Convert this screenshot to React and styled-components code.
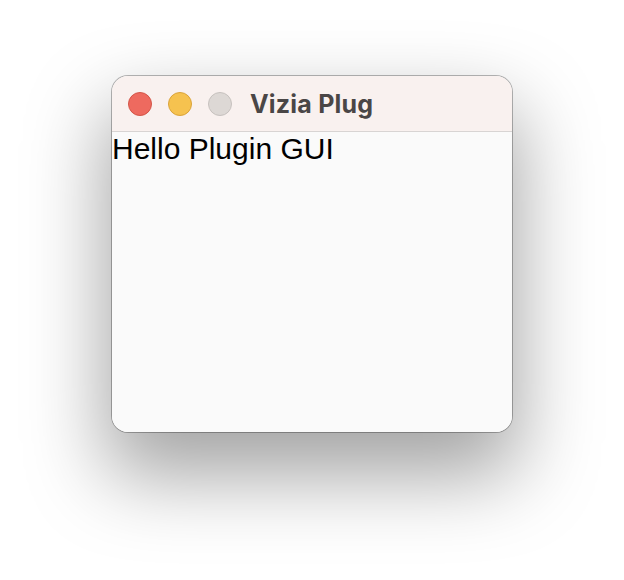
import React from "react";
import styled, { createGlobalStyle } from "styled-components";

const Global = createGlobalStyle`
  html, body { margin: 0; padding: 0; background: #ffffff; }
  body { width: 624px; height: 580px; overflow: hidden; }
`;

const Desktop = styled.div`
  width: 624px;
  height: 580px;
  display: flex;
  justify-content: center;
  align-items: flex-start;
  padding-top: 76px;
  box-sizing: border-box;
  background: #ffffff;
`;

const Window = styled.div`
  width: 400px;
  border-radius: 16px;
  overflow: hidden;
  background: #fafafa;
  box-shadow: 0 0 0 1px rgba(0, 0, 0, 0.28), 0 38px 80px 6px rgba(0, 0, 0, 0.36);
  display: flex;
  flex-direction: column;
`;

const TitleBar = styled.div`
  height: 55px;
  background: #f9f1ef;
  border-bottom: 1px solid #d8d4d3;
  display: flex;
  align-items: center;
  padding-left: 16px;
  gap: 16px;
`;

const Light = styled.span`
  width: 24px;
  height: 24px;
  border-radius: 50%;
  box-sizing: border-box;
  background: ${(p) => p.$fill};
  border: 1px solid ${(p) => p.$edge};
  flex: none;
`;

const Title = styled.span`
  margin-left: 2px;
  font-family: Inter, "Liberation Sans", sans-serif;
  font-weight: 700;
  font-size: 25px;
  color: #4a4646;
  letter-spacing: 0.2px;
`;

const Content = styled.div`
  height: 300px;
  background: #fafafa;
`;

const Label = styled.div`
  font-family: "Liberation Sans", Arial, sans-serif;
  font-size: 30px;
  color: #000000;
  padding-left: 0px;
`;

export default function App() {
  return (
    <>
      <Global />
      <Desktop>
        <Window>
          <TitleBar>
            <Light $fill="#ee6a5f" $edge="#d35548" />
            <Light $fill="#f6c24f" $edge="#daa33a" />
            <Light $fill="#ddd8d5" $edge="#c6c1be" />
            <Title>Vizia Plug</Title>
          </TitleBar>
          <Content>
            <Label>Hello Plugin GUI</Label>
          </Content>
        </Window>
      </Desktop>
    </>
  );
}
